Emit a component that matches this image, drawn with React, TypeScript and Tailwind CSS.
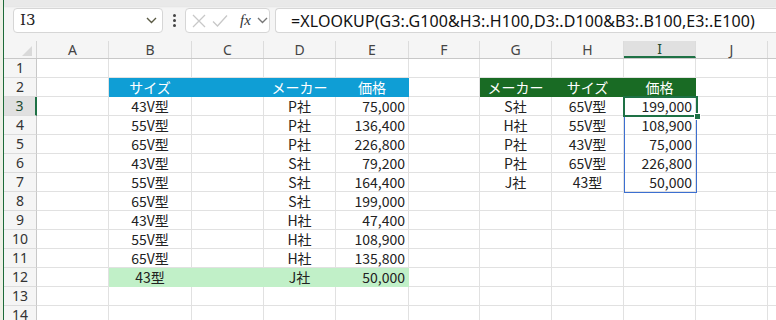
import React from 'react';

const colWidths = [72, 83, 72, 72, 73, 71, 72, 72, 72, 72, 40];
const colNames = ['A', 'B', 'C', 'D', 'E', 'F', 'G', 'H', 'I', 'J', ''];

type Cell = { v: string; align?: 'c' | 'r' };

const sizes = ['43V型', '55V型', '65V型', '43V型', '55V型', '65V型', '43V型', '55V型', '65V型', '43型'];
const makers = ['P社', 'P社', 'P社', 'S社', 'S社', 'S社', 'H社', 'H社', 'H社', 'J社'];
const prices = ['75,000', '136,400', '226,800', '79,200', '164,400', '199,000', '47,400', '108,900', '135,800', '50,000'];

const lookMakers = ['S社', 'H社', 'P社', 'P社', 'J社'];
const lookSizes = ['65V型', '55V型', '43V型', '65V型', '43型'];
const lookPrices = ['199,000', '108,900', '75,000', '226,800', '50,000'];

// returns cell content and fill for row r (1-based), col c (0 = A)
function cellAt(r: number, c: number): { cell?: Cell; fill?: string; white?: boolean } {
  if (r === 2) {
    if (c >= 1 && c <= 4) {
      const t = c === 1 ? 'サイズ' : c === 3 ? 'メーカー' : c === 4 ? '価格' : '';
      return { cell: { v: t, align: 'c' }, fill: '#0f9ed5', white: true };
    }
    if (c >= 6 && c <= 8) {
      const t = c === 6 ? 'メーカー' : c === 7 ? 'サイズ' : '価格';
      return { cell: { v: t, align: 'c' }, fill: '#196b24', white: true };
    }
    return {};
  }
  if (r >= 3 && r <= 12) {
    const i = r - 3;
    const fill = r === 12 && c >= 1 && c <= 4 ? '#c1f0c8' : undefined;
    if (c === 1) return { cell: { v: sizes[i], align: 'c' }, fill };
    if (c === 3) return { cell: { v: makers[i], align: 'c' }, fill };
    if (c === 4) return { cell: { v: prices[i], align: 'r' }, fill };
    if (i < 5) {
      if (c === 6) return { cell: { v: lookMakers[i], align: 'c' } };
      if (c === 7) return { cell: { v: lookSizes[i], align: 'c' } };
      if (c === 8) return { cell: { v: lookPrices[i], align: 'r' } };
    }
    return { fill };
  }
  return {};
}

const CheckIcon = () => (
  <svg width="16" height="14" viewBox="0 0 16 14" fill="none" stroke="#c8c8c8" strokeWidth="1.3">
    <path d="M1 7.5 L5.5 12 L15 1.5" />
  </svg>
);

const CrossIcon = () => (
  <svg width="14" height="14" viewBox="0 0 14 14" fill="none" stroke="#c8c8c8" strokeWidth="1.3">
    <path d="M1 1 L13 13 M13 1 L1 13" />
  </svg>
);

const Chevron = ({ color = '#555' }: { color?: string }) => (
  <svg width="11" height="7" viewBox="0 0 11 7" fill="none" stroke={color} strokeWidth="1.4">
    <path d="M1 1 L5.5 5.5 L10 1" />
  </svg>
);

export default function App() {
  const rows = Array.from({ length: 14 }, (_, i) => i + 1);

  return (
    <div className="relative w-[776px] h-[320px] overflow-hidden bg-[#f5f5f5] flex font-['Noto_Sans_CJK_JP',sans-serif] text-[#222]">
      {/* left window edge */}
      <div className="w-[4px] shrink-0 bg-[#eef0e6] border-r border-[#1d6b3a]" />

      <div className="flex-1 flex flex-col min-w-0 overflow-hidden">
        {/* ribbon bottom */}
        <div className="h-[6px] shrink-0 bg-[#e9e9e9] shadow-[0_1px_2px_rgba(0,0,0,0.08)]" />

        {/* formula bar */}
        <div className="h-[35px] flex items-start pt-[2px] shrink-0">
          <div className="ml-[9px] w-[150px] h-[25px] bg-white border border-[#d6d6d6] rounded-[4px] flex items-center pl-[6px] pr-[5px]">
            <span className="flex-1 text-[15px] font-['DejaVu_Serif',serif] text-[#222] leading-none">I3</span>
            <Chevron color="#5a5a44" />
          </div>
          <div className="w-[22px] h-[25px] flex flex-col items-center justify-center gap-[2px]">
            <span className="w-[3px] h-[3px] bg-[#444] rounded-full" />
            <span className="w-[3px] h-[3px] bg-[#444] rounded-full" />
            <span className="w-[3px] h-[3px] bg-[#444] rounded-full" />
          </div>
          <div className="w-[85px] h-[25px] bg-white border border-[#d6d6d6] rounded-[4px] flex items-center pl-[6px] gap-[6px]">
            <CrossIcon />
            <CheckIcon />
            <span className="ml-[6px] text-[15px] italic font-['Liberation_Serif',serif] text-[#333] leading-none">fx</span>
            <Chevron color="#777" />
          </div>
          <div className="ml-[5px] flex-1 h-[25px] bg-white border border-[#d6d6d6] border-r-0 rounded-l-[4px] flex items-center pl-[15px]">
            <span className="text-[16px] font-['Noto_Sans',sans-serif] text-[#111] whitespace-nowrap tracking-[0.1px]">
              =XLOOKUP(G3:.G100&amp;H3:.H100,D3:.D100&amp;B3:.B100,E3:.E100)
            </span>
          </div>
        </div>

        {/* column header */}
        <div className="flex h-[18px] shrink-0 border-b border-[#c8c8c8]">
          <div className="w-[33px] shrink-0 relative border-r border-[#d4d4d4]">
            <div className="absolute right-[4px] bottom-[2px] w-0 h-0 border-l-[10px] border-l-transparent border-b-[10px] border-b-[#d9d9d9]" />
          </div>
          {colNames.map((n, i) => (
            <div
              key={i}
              style={{ width: colWidths[i] }}
              className={
                'shrink-0 flex items-center justify-center text-[14px] leading-none border-r border-[#dcdcdc] font-["Noto_Sans",sans-serif] ' +
                (n === 'I' ? 'bg-[#e0e0e0] border-b-2 border-b-[#1e7145] text-[#1e4a2f]' : 'text-[#444]')
              }
            >
              {n}
            </div>
          ))}
        </div>

        {/* rows */}
        {rows.map((r) => (
          <div key={r} className="flex h-[19px] shrink-0">
            <div
              className={
                'w-[33px] shrink-0 flex items-center justify-center text-[14px] leading-none font-["Noto_Sans",sans-serif] border-b border-[#dcdcdc] ' +
                (r === 3
                  ? 'bg-[#e0e0e0] border-r-2 border-r-[#1e7145] text-[#1e4a2f]'
                  : 'border-r border-r-[#c8c8c8] text-[#333]')
              }
            >
              {r}
            </div>
            {colWidths.map((w, c) => {
              const { cell, fill, white } = cellAt(r, c);
              return (
                <div
                  key={c}
                  style={fill ? { width: w, background: fill, borderColor: fill } : { width: w }}
                  className={
                    'shrink-0 bg-white border-r border-b border-[#e1e1e1] flex items-center text-[14px] leading-none whitespace-nowrap ' +
                    (cell?.align === 'r' ? 'justify-end pr-[3px] ' : 'justify-center ') +
                    (white ? 'text-white' : 'text-[#222]')
                  }
                >
                  {cell?.v}
                </div>
              );
            })}
          </div>
        ))}
      </div>

      {/* spill range + active cell */}
      <div className="absolute left-[624px] top-[97px] w-[73px] h-[96px] border border-[#3c6fd1] pointer-events-none" />
      <div className="absolute left-[623px] top-[96px] w-[75px] h-[21px] border-2 border-[#1e7145] pointer-events-none" />
      <div className="absolute left-[694px] top-[113px] w-[5px] h-[5px] bg-[#1e7145] border border-white box-content pointer-events-none" />
    </div>
  );
}
